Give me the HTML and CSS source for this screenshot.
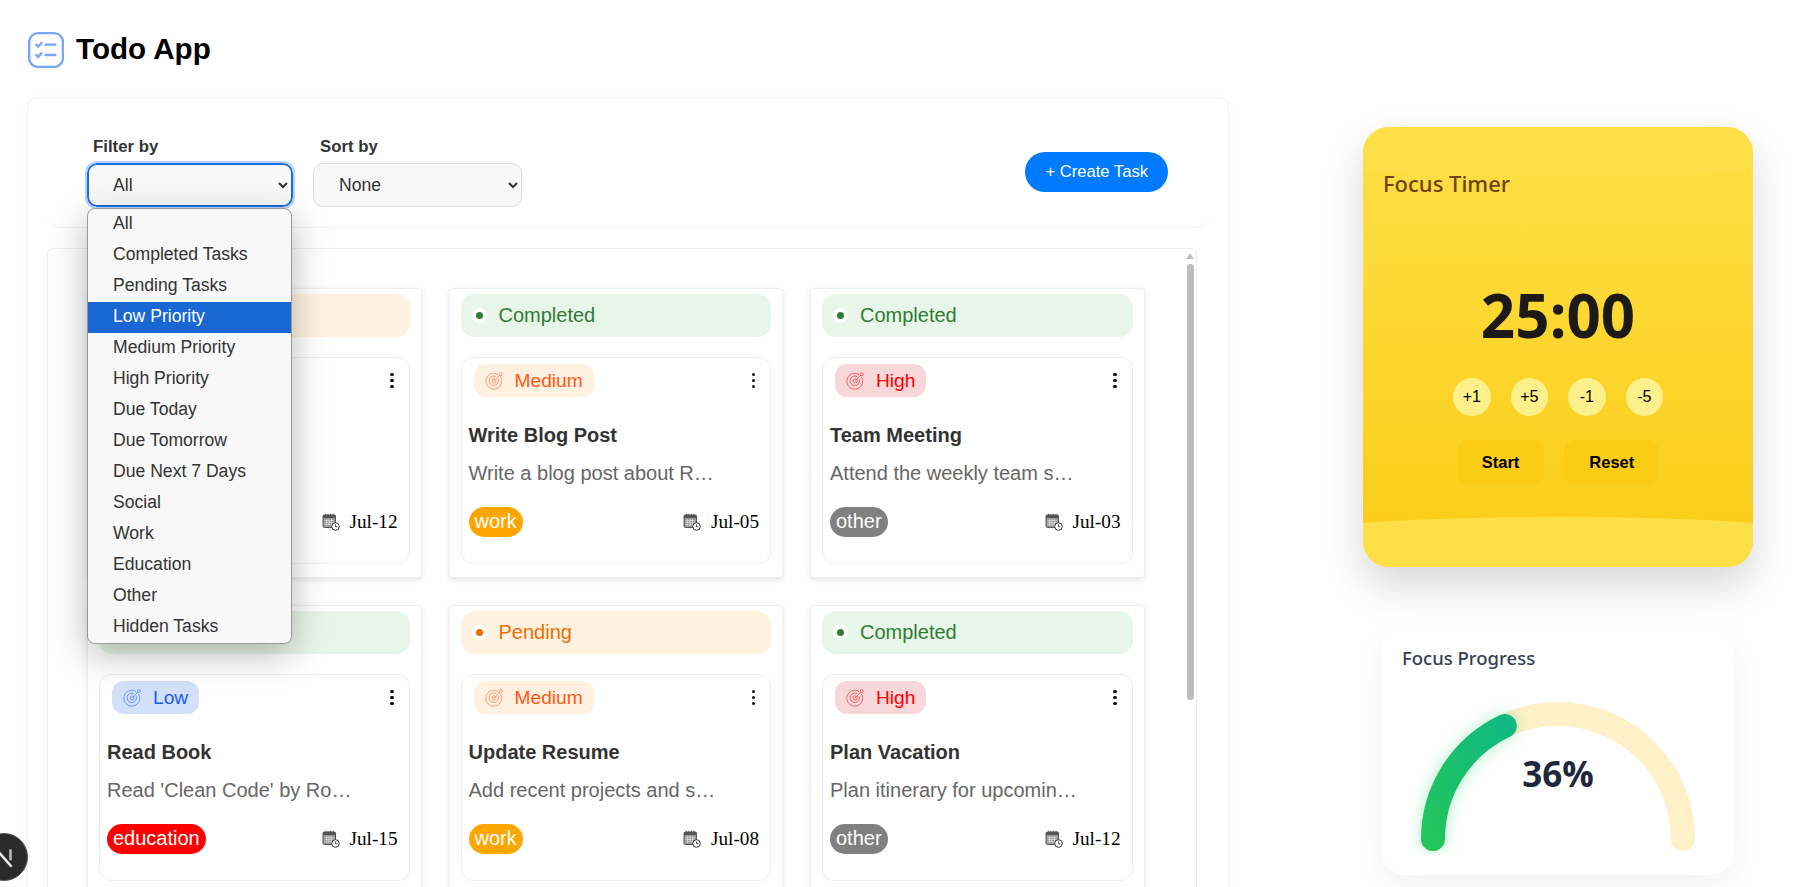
FILE: index.html
```html
<!DOCTYPE html>
<html lang="en">
<head>
    <meta charset="UTF-8">
    <meta name="viewport" content="width=device-width, initial-scale=1.0">
    <title>Todo App</title>
    <link rel="stylesheet" href="styles.css">
</head>
<body>

<svg class="sprite" width="0" height="0" aria-hidden="true">
    <symbol id="target" viewBox="0 0 24 24">
        <g fill="none" stroke="currentColor" stroke-width="1">
            <path d="M19.5 7.5a10 10 0 1 1-3-3"/>
            <path d="M16.6 10a6 6 0 1 1-2.6-2.9"/>
            <circle cx="11.500" cy="12.500" r="2.500"/>
            <path d="M11.500 12.500 19 5"/>
            <circle cx="20" cy="4" r="1.800"/>
        </g>
    </symbol>
    <symbol id="calendar" viewBox="0 0 18 18">
        <rect x="1" y="2" width="12.500" height="12.500" rx="1.500" fill="#9a9a9a" stroke="#555" stroke-width="1"/>
        <rect x="1" y="2" width="12.500" height="3" fill="#555"/>
        <path d="M3.500 .8v2.500M6 .8v2.500M8.500 .8v2.500M11 .8v2.500" stroke="#555" stroke-width="1"/>
        <path d="M2.500 7.500h9.500M2.500 9.500h9.500M2.500 11.500h9.500M4.500 6v7M7 6v7M9.500 6v7" stroke="#e4e4e4" stroke-width=".6"/>
        <circle cx="13.500" cy="13.500" r="3.800" fill="#fff" stroke="#333" stroke-width="1"/>
        <path d="M13.500 11.500v2.200h1.800" fill="none" stroke="#333" stroke-width=".9"/>
    </symbol>
</svg>

<div class="page">
    <div class="main-col">
        <header class="app-header">
            <svg class="app-logo" viewBox="0 0 34 34" aria-hidden="true">
                <rect x="2" y="2" width="31" height="31" rx="8" fill="#fff" stroke="#78a6fb" stroke-width="2.200"/>
                <path d="M8.500 12.500l1.800 1.800 3-3.300M8.500 22l1.800 1.800 3-3.300" fill="none" stroke="#78a6fb" stroke-width="2.200" stroke-linecap="round"/>
                <path d="M17 12.500h9M17 22h9" fill="none" stroke="#78a6fb" stroke-width="2.200" stroke-linecap="round"/>
            </svg>
            <h1>Todo App</h1>
        </header>

        <section class="panel">
            <div class="filter-bar">
                <div class="field">
                    <label for="filter">Filter by</label>
                    <select id="filter" class="select select-focus">
                        <option>All</option>
                    </select>
                    <ul class="menu">
                        <li>All</li>
                        <li>Completed Tasks</li>
                        <li>Pending Tasks</li>
                        <li class="selected">Low Priority</li>
                        <li>Medium Priority</li>
                        <li>High Priority</li>
                        <li>Due Today</li>
                        <li>Due Tomorrow</li>
                        <li>Due Next 7 Days</li>
                        <li>Social</li>
                        <li>Work</li>
                        <li>Education</li>
                        <li>Other</li>
                        <li>Hidden Tasks</li>
                    </ul>
                </div>
                <div class="field field-sort">
                    <label for="sort">Sort by</label>
                    <select id="sort" class="select select-sort">
                        <option>None</option>
                    </select>
                </div>
                <button class="create-btn">+ Create Task</button>
            </div>

            <div class="task-list">
                <div class="task-grid">

                    <!-- first card sits behind the open menu, only its right edge shows -->
                    <article class="task">
                        <div class="status pending"></div>
                        <div class="task-body">
                            <div class="task-top">
                                <span class="priority"></span>
                                <span class="kebab"><i></i><i></i><i></i></span>
                            </div>
                            <div class="task-foot task-foot-far">
                                <span></span>
                                <span class="date"><svg class="cal"><use href="#calendar"/></svg>Jul-12</span>
                            </div>
                        </div>
                    </article>

                    <article class="task">
                        <div class="status completed"><span class="dot"></span>Completed</div>
                        <div class="task-body">
                            <div class="task-top">
                                <span class="priority medium"><svg class="target"><use href="#target"/></svg>Medium</span>
                                <span class="kebab"><i></i><i></i><i></i></span>
                            </div>
                            <h3>Write Blog Post</h3>
                            <p>Write a blog post about R…</p>
                            <div class="task-foot">
                                <span class="tag work">work</span>
                                <span class="date"><svg class="cal"><use href="#calendar"/></svg>Jul-05</span>
                            </div>
                        </div>
                    </article>

                    <article class="task">
                        <div class="status completed"><span class="dot"></span>Completed</div>
                        <div class="task-body">
                            <div class="task-top">
                                <span class="priority high"><svg class="target"><use href="#target"/></svg>High</span>
                                <span class="kebab"><i></i><i></i><i></i></span>
                            </div>
                            <h3>Team Meeting</h3>
                            <p>Attend the weekly team s…</p>
                            <div class="task-foot">
                                <span class="tag other">other</span>
                                <span class="date"><svg class="cal"><use href="#calendar"/></svg>Jul-03</span>
                            </div>
                        </div>
                    </article>

                    <article class="task">
                        <div class="status completed"></div>
                        <div class="task-body">
                            <div class="task-top">
                                <span class="priority low"><svg class="target"><use href="#target"/></svg>Low</span>
                                <span class="kebab"><i></i><i></i><i></i></span>
                            </div>
                            <h3>Read Book</h3>
                            <p>Read 'Clean Code' by Ro…</p>
                            <div class="task-foot">
                                <span class="tag education">education</span>
                                <span class="date"><svg class="cal"><use href="#calendar"/></svg>Jul-15</span>
                            </div>
                        </div>
                    </article>

                    <article class="task">
                        <div class="status pending"><span class="dot"></span>Pending</div>
                        <div class="task-body">
                            <div class="task-top">
                                <span class="priority medium"><svg class="target"><use href="#target"/></svg>Medium</span>
                                <span class="kebab"><i></i><i></i><i></i></span>
                            </div>
                            <h3>Update Resume</h3>
                            <p>Add recent projects and s…</p>
                            <div class="task-foot">
                                <span class="tag work">work</span>
                                <span class="date"><svg class="cal"><use href="#calendar"/></svg>Jul-08</span>
                            </div>
                        </div>
                    </article>

                    <article class="task">
                        <div class="status completed"><span class="dot"></span>Completed</div>
                        <div class="task-body">
                            <div class="task-top">
                                <span class="priority high"><svg class="target"><use href="#target"/></svg>High</span>
                                <span class="kebab"><i></i><i></i><i></i></span>
                            </div>
                            <h3>Plan Vacation</h3>
                            <p>Plan itinerary for upcomin…</p>
                            <div class="task-foot">
                                <span class="tag other">other</span>
                                <span class="date"><svg class="cal"><use href="#calendar"/></svg>Jul-12</span>
                            </div>
                        </div>
                    </article>

                </div>
                <div class="scrollbar"><span class="scroll-arrow"></span><span class="scroll-thumb"></span></div>
            </div>
        </section>
    </div>

    <aside class="side-col">
        <div class="timer">
            <h2>Focus Timer</h2>
            <div class="time">25:00</div>
            <div class="adjust">
                <button>+1</button>
                <button>+5</button>
                <button>-1</button>
                <button>-5</button>
            </div>
            <div class="timer-actions">
                <button>Start</button>
                <button>Reset</button>
            </div>
        </div>

        <div class="progress">
            <h2>Focus Progress</h2>
            <div class="gauge">
                <svg viewBox="0 0 312 160" width="312" height="160" aria-hidden="true">
                    <defs>
                        <linearGradient id="greenGrad" x1="0" y1="1" x2="1" y2="0">
                            <stop offset="0" stop-color="#22c55e"/>
                            <stop offset="1" stop-color="#10b981"/>
                        </linearGradient>
                        <filter id="glow" x="-30%" y="-30%" width="160%" height="160%">
                            <feGaussianBlur stdDeviation="8"/>
                        </filter>
                        <clipPath id="gaugeClip"><rect x="0" y="0" width="312" height="155"/></clipPath>
                    </defs>
                    <path d="M31 139A125 125 0 0 1 281 139" fill="none" stroke="#fef0c7" stroke-width="24" stroke-linecap="round"/>
                    <g clip-path="url(#gaugeClip)">
                        <path d="M31 139A125 125 0 0 1 102.800 26" fill="none" stroke="#22c55e" stroke-opacity=".3" stroke-width="24" stroke-linecap="round" filter="url(#glow)"/>
                    </g>
                    <path d="M31 139A125 125 0 0 1 102.800 26" fill="none" stroke="url(#greenGrad)" stroke-width="24" stroke-linecap="round"/>
                </svg>
                <span class="percent">36%</span>
            </div>
        </div>
    </aside>
</div>

<div class="next-badge">
    <svg viewBox="0 0 24 24" width="26" height="26" aria-hidden="true">
        <path d="M5 19V5l14 16" fill="none" stroke="#eee" stroke-width="2.400"/>
        <path d="M18 5v10" fill="none" stroke="#bbb" stroke-width="2.400"/>
    </svg>
</div>

</body>
</html>
```

FILE: styles.css
```css
* {
    box-sizing: border-box;
}
html, body {
    height: 100%;
}
body {
    margin: 0;
    font-family: 'Liberation Sans', Arial, sans-serif;
    background: #fff;
    color: #333;
    overflow: hidden;
}
.sprite {
    position: absolute;
}
.page {
    display: flex;
    align-items: flex-start;
    padding-left: 27px;
    height: 887px;
}
.main-col {
    width: 1202px;
    flex-shrink: 0;
}

/* header */
.app-header {
    display: flex;
    align-items: center;
    gap: 12px;
    height: 97px;
    padding-top: 1px;
}
.app-logo {
    width: 37px;
    height: 37px;
}
.app-header h1 {
    margin: 0;
    font-size: 29.600px;
    font-weight: bold;
    color: #000;
}

/* main panel */
.panel {
    background: #fff;
    border: 1px solid #f2f2f2;
    border-radius: 10px;
    box-shadow: 0 2px 8px rgba(0, 0, 0, 0.04);
    padding: 0 19px;
    height: 840px;
}
.filter-bar {
    display: flex;
    gap: 20px;
    height: 130px;
    padding: 39px 40px 0;
    border-bottom: 1px solid #eee;
    border-radius: 0 0 14px 14px;
}
.field {
    position: relative;
    display: flex;
    flex-direction: column;
}
.field label {
    font-size: 16.800px;
    line-height: 19px;
    font-weight: bold;
    color: #333;
    margin: 0 0 7px 6px;
}
.field-sort label {
    margin-left: 7px;
}
.select {
    height: 44px;
    font-family: inherit;
    font-size: 17.600px;
    color: #333;
    background-color: #f8f8f8;
    border: 1px solid #ddd;
    border-radius: 10px;
    padding: 0 4px 0 21px;
}
.select-focus {
    width: 206px;
    border: 2px solid #1a6fe0;
    outline: 2px solid #b9d2fb;
    padding-left: 20px;
}
.select-sort {
    width: 209px;
}
.menu {
    position: absolute;
    top: 71px;
    left: 0;
    z-index: 20;
    width: 205px;
    margin: 0;
    padding: 0;
    list-style: none;
    background: #f8f8f8;
    border: 1px solid #999;
    border-radius: 8px;
    box-shadow: 0 10px 36px rgba(0, 0, 0, 0.28);
    font-size: 17.600px;
    overflow: hidden;
}
.menu li {
    height: 31px;
    line-height: 29px;
    padding-left: 25px;
    color: #333;
}
.menu li.selected {
    background: #1967d2;
    color: #fff;
}
.create-btn {
    margin: 15px 1px 0 auto;
    height: 40px;
    padding: 0 20px;
    font-family: inherit;
    font-size: 16.600px;
    color: #fff;
    background: #007bff;
    border: none;
    border-radius: 20px;
}

/* task list */
.task-list {
    position: relative;
    width: 1150px;
    height: 690px;
    margin-top: 20px;
    border: 1px solid #eee;
    border-radius: 6px;
    overflow: hidden;
}
.task-grid {
    display: grid;
    grid-template-columns: repeat(3, 334.500px);
    gap: 27px;
    padding: 39px 0 0 39px;
}
.scrollbar {
    position: absolute;
    top: 0;
    right: 2px;
    width: 8px;
    display: flex;
    flex-direction: column;
    align-items: center;
}
.scroll-arrow {
    margin-top: 4px;
    border-left: 4px solid transparent;
    border-right: 4px solid transparent;
    border-bottom: 6px solid #c0c0c0;
}
.scroll-thumb {
    width: 7px;
    height: 436px;
    margin-top: 5px;
    background: #bdbdbd;
    border-radius: 4px;
}
.task {
    height: 290px;
    padding: 5px 11px;
    background: #fff;
    border: 1px solid #eee;
    border-radius: 4px;
    box-shadow: 0 2px 6px rgba(0, 0, 0, 0.1);
}
.status {
    display: flex;
    align-items: center;
    gap: 12px;
    height: 43px;
    padding-left: 11px;
    border-radius: 14px;
    font-size: 20px;
}
.status .dot {
    position: relative;
    width: 15px;
    height: 15px;
    border-radius: 50%;
    background: #fff;
}
.status .dot::after {
    content: "";
    position: absolute;
    top: 4px;
    left: 4px;
    width: 7px;
    height: 7px;
    border-radius: 50%;
    background: currentColor;
}
.status.completed {
    background: #e8f5e9;
    color: #2e7d32;
}
.status.pending {
    background: #fff3e0;
    color: #ef6c00;
}
.task-body {
    height: 207px;
    margin-top: 20px;
    padding: 6px 7px 0;
    border: 1px solid #eee;
    border-radius: 12px;
}
.task-top {
    display: flex;
    align-items: center;
    justify-content: space-between;
    padding: 0 8px 0 5px;
}
.priority {
    display: inline-flex;
    align-items: center;
    gap: 11px;
    height: 33px;
    padding: 0 11px;
    border-radius: 12px;
    font-size: 19.200px;
}
.target {
    width: 19px;
    height: 19px;
    opacity: 0.7;
}
.priority.medium {
    background: #fff0e0;
    color: #ff5a14;
}
.priority.high {
    background: #f8d7da;
    color: #ff0000;
}
.priority.low {
    background: #d2e1f7;
    color: #1a5cf0;
}
.kebab {
    display: flex;
    flex-direction: column;
    gap: 2.500px;
}
.kebab i {
    width: 3.500px;
    height: 3.500px;
    border-radius: 50%;
    background: #111;
}
.task-body h3 {
    margin: 26px 0 0;
    font-size: 20px;
    line-height: 24px;
    font-weight: bold;
    color: #333;
}
.task-body p {
    margin: 14px 0 0;
    font-size: 20px;
    line-height: 24px;
    color: #666;
    white-space: nowrap;
}
.task-foot {
    display: flex;
    align-items: center;
    justify-content: space-between;
    margin-top: 22px;
    padding-right: 4px;
}
.task-foot-far {
    margin-top: 110px;
    height: 30px;
}
.tag {
    height: 30px;
    line-height: 29px;
    padding: 0 6px;
    border-radius: 15px;
    font-size: 20px;
    color: #fff;
}
.tag.work {
    background: #ffa500;
}
.tag.other {
    background: #808080;
}
.tag.education {
    background: #ff0000;
}
.date {
    display: flex;
    align-items: center;
    gap: 10px;
    font-family: 'Liberation Serif', 'Times New Roman', serif;
    font-size: 19.200px;
    color: #000;
}
.cal {
    width: 18px;
    height: 18px;
}

/* side column */
.side-col {
    display: flex;
    flex-direction: column;
    align-items: center;
    gap: 60px;
    width: 390px;
    margin: 127px 0 0 134px;
    flex-shrink: 0;
}
.timer {
    position: relative;
    width: 390px;
    height: 440px;
    border-radius: 26px;
    background: linear-gradient(180deg, #fde047 0%, #facc15 100%);
    box-shadow: 0 18px 40px rgba(0, 0, 0, 0.16);
    overflow: hidden;
    display: flex;
    flex-direction: column;
    align-items: center;
}
.timer::before {
    content: "";
    position: absolute;
    top: 0;
    left: -15%;
    right: -15%;
    height: 50px;
    background: #fde047;
    border-radius: 0 0 50% 50% / 0 0 17px 17px;
}
.timer::after {
    content: "";
    position: absolute;
    left: -15%;
    right: -15%;
    bottom: 0;
    height: 50px;
    background: #fde047;
    border-radius: 50% 50% 0 0 / 17px 17px 0 0;
}
.timer h2 {
    position: relative;
    align-self: flex-start;
    margin: 41px 0 0 20px;
    font-family: 'Noto Sans', sans-serif;
    font-size: 22px;
    line-height: 30px;
    font-weight: 500;
    color: #713f12;
}
.time {
    margin-top: 75px;
    font-family: 'Open Sans', sans-serif;
    font-size: 60px;
    line-height: 84px;
    font-weight: 700;
    color: #1c1917;
}
.adjust {
    display: flex;
    gap: 20px;
    margin-top: 21px;
}
.adjust button {
    width: 37.500px;
    height: 38px;
    padding: 0;
    border: none;
    border-radius: 50%;
    background: #fef08a;
    color: #000;
    font-family: inherit;
    font-size: 16px;
}
.timer-actions {
    display: flex;
    gap: 20px;
    margin-top: 24px;
}
.timer-actions button {
    height: 45px;
    padding: 0 25px;
    border: none;
    border-radius: 12px;
    background: #facc15;
    color: #000;
    font-family: inherit;
    font-size: 16.500px;
    font-weight: bold;
}
.progress {
    width: 352px;
    height: 248px;
    padding: 18px 20px 0;
    background: #fff;
    border-radius: 24px;
    box-shadow: 0 10px 30px rgba(0, 0, 0, 0.06);
}
.progress h2 {
    margin: 0;
    font-family: 'Noto Sans', sans-serif;
    font-size: 18.500px;
    line-height: 26px;
    font-weight: 500;
    color: #334155;
}
.gauge {
    position: relative;
    margin: 29px 0 0 0;
}
.gauge svg {
    display: block;
}
.percent {
    position: absolute;
    top: 50px;
    left: 0;
    width: 312px;
    text-align: center;
    font-family: 'Open Sans', sans-serif;
    font-size: 35px;
    line-height: 48px;
    font-weight: 700;
    color: #1e293b;
}

/* dev badge */
.next-badge {
    position: fixed;
    left: -20px;
    top: 833px;
    z-index: 30;
    width: 48px;
    height: 48px;
    border-radius: 50%;
    background: #2b2b2b;
    border: 1px solid #555;
    display: flex;
    align-items: center;
    justify-content: center;
}
```
